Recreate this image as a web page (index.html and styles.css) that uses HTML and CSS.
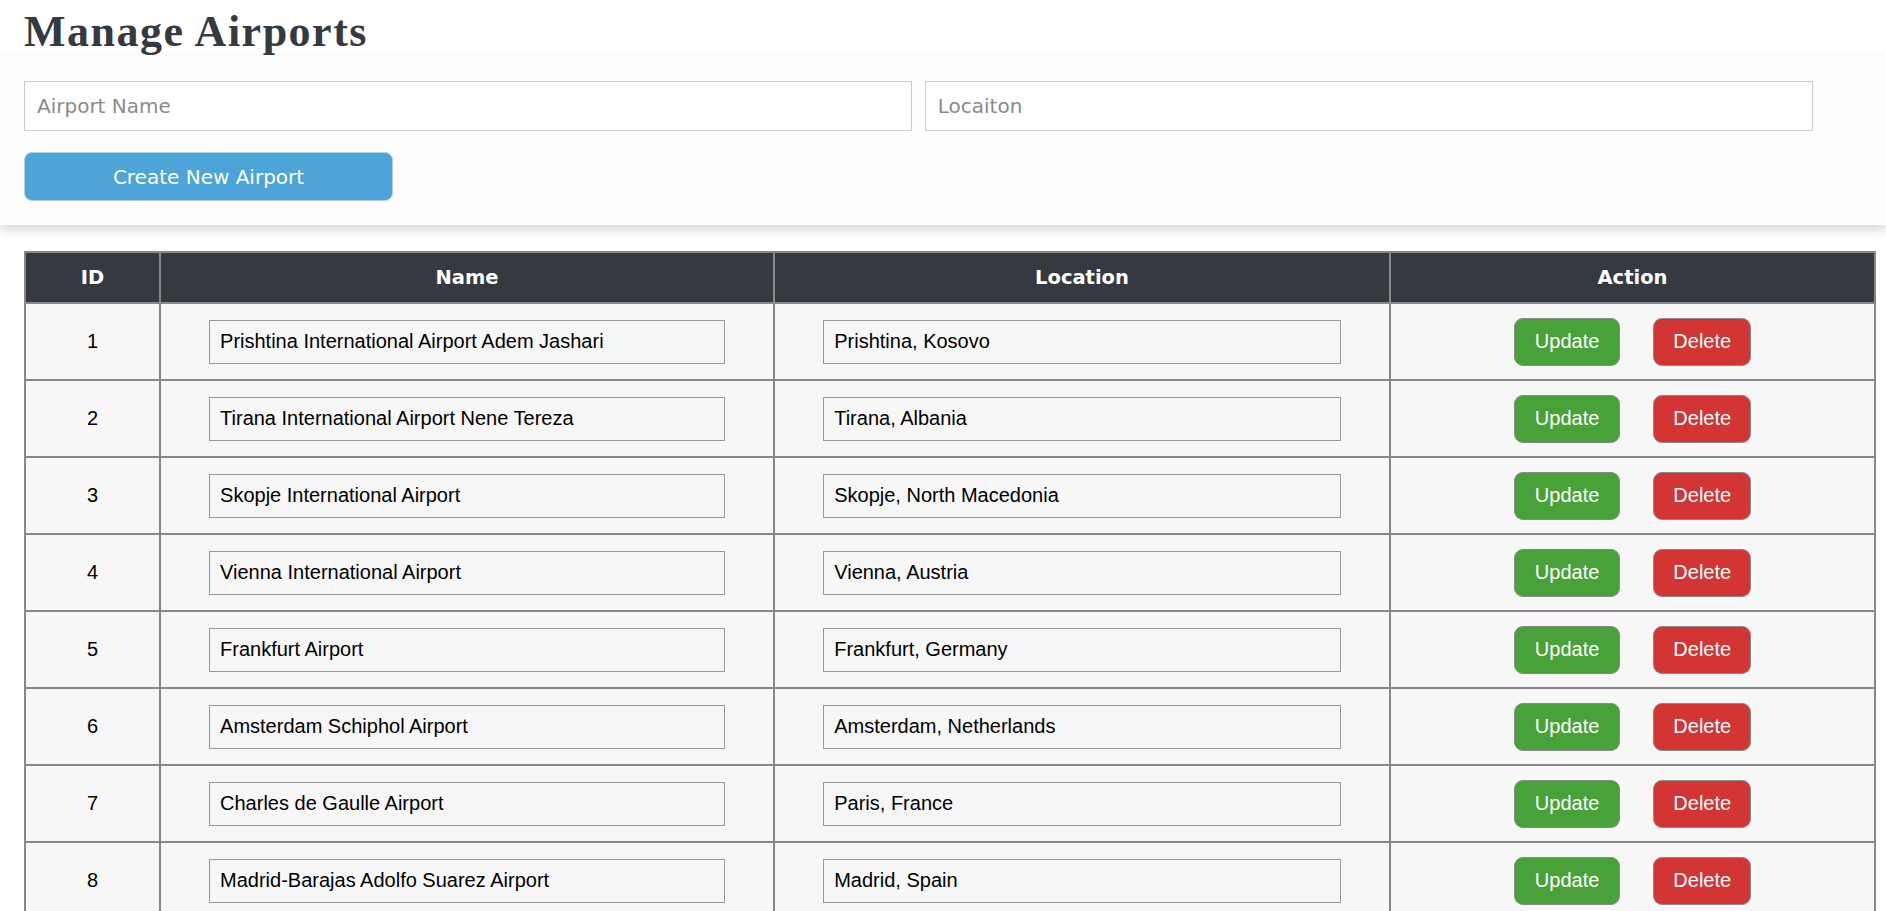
FILE: index.html
```html
<!DOCTYPE html>
<html lang="en">
<head>
<meta charset="utf-8">
<title>Manage Airports</title>
<link rel="stylesheet" href="styles.css">
</head>
<body>
  <h1 class="page-title">Manage Airports</h1>
  <section class="create-card">
    <div class="create-fields">
      <input class="create-input" type="text" placeholder="Airport Name">
      <input class="create-input" type="text" placeholder="Locaiton">
    </div>
    <button class="create-btn" type="button">Create New Airport</button>
  </section>

  <table class="airports">
    <colgroup>
      <col class="col-id">
      <col class="col-name">
      <col class="col-loc">
      <col class="col-act">
    </colgroup>
    <thead>
      <tr><th>ID</th><th>Name</th><th>Location</th><th>Action</th></tr>
    </thead>
    <tbody>
      <tr>
        <td class="cell-id">1</td>
        <td><input class="cell-input" type="text" value="Prishtina International Airport Adem Jashari"></td>
        <td><input class="cell-input" type="text" value="Prishtina, Kosovo"></td>
        <td><div class="actions"><button class="btn btn-update">Update</button><button class="btn btn-delete">Delete</button></div></td>
      </tr>
      <tr>
        <td class="cell-id">2</td>
        <td><input class="cell-input" type="text" value="Tirana International Airport Nene Tereza"></td>
        <td><input class="cell-input" type="text" value="Tirana, Albania"></td>
        <td><div class="actions"><button class="btn btn-update">Update</button><button class="btn btn-delete">Delete</button></div></td>
      </tr>
      <tr>
        <td class="cell-id">3</td>
        <td><input class="cell-input" type="text" value="Skopje International Airport"></td>
        <td><input class="cell-input" type="text" value="Skopje, North Macedonia"></td>
        <td><div class="actions"><button class="btn btn-update">Update</button><button class="btn btn-delete">Delete</button></div></td>
      </tr>
      <tr>
        <td class="cell-id">4</td>
        <td><input class="cell-input" type="text" value="Vienna International Airport"></td>
        <td><input class="cell-input" type="text" value="Vienna, Austria"></td>
        <td><div class="actions"><button class="btn btn-update">Update</button><button class="btn btn-delete">Delete</button></div></td>
      </tr>
      <tr>
        <td class="cell-id">5</td>
        <td><input class="cell-input" type="text" value="Frankfurt Airport"></td>
        <td><input class="cell-input" type="text" value="Frankfurt, Germany"></td>
        <td><div class="actions"><button class="btn btn-update">Update</button><button class="btn btn-delete">Delete</button></div></td>
      </tr>
      <tr>
        <td class="cell-id">6</td>
        <td><input class="cell-input" type="text" value="Amsterdam Schiphol Airport"></td>
        <td><input class="cell-input" type="text" value="Amsterdam, Netherlands"></td>
        <td><div class="actions"><button class="btn btn-update">Update</button><button class="btn btn-delete">Delete</button></div></td>
      </tr>
      <tr>
        <td class="cell-id">7</td>
        <td><input class="cell-input" type="text" value="Charles de Gaulle Airport"></td>
        <td><input class="cell-input" type="text" value="Paris, France"></td>
        <td><div class="actions"><button class="btn btn-update">Update</button><button class="btn btn-delete">Delete</button></div></td>
      </tr>
      <tr>
        <td class="cell-id">8</td>
        <td><input class="cell-input" type="text" value="Madrid-Barajas Adolfo Suarez Airport"></td>
        <td><input class="cell-input" type="text" value="Madrid, Spain"></td>
        <td><div class="actions"><button class="btn btn-update">Update</button><button class="btn btn-delete">Delete</button></div></td>
      </tr>
    </tbody>
  </table>
</body>
</html>
```

FILE: styles.css
```css
html, body {
  margin: 0;
  padding: 0;
  background: #ffffff;
}

body {
  font-family: "Liberation Sans", Arial, sans-serif;
  color: #000;
}

.page-title {
  font-family: "Liberation Serif", "Times New Roman", serif;
  font-weight: bold;
  font-size: 44px;
  line-height: 44px;
  letter-spacing: 1.5px;
  color: #343a40;
  margin: 10px 0 2px 24px;
}

.create-card {
  background: #fefefe;
  box-shadow: 0 5px 10px rgba(0, 0, 0, 0.16);
  padding: 25px 24px 24px;
  display: flex;
  flex-direction: column;
  gap: 21px;
}

.create-fields {
  display: flex;
  gap: 13px;
}

.create-input {
  box-sizing: border-box;
  width: 48.3%;
  height: 50px;
  border: 1px solid #cccccc;
  background: #fff;
  padding: 0 12px;
  font-family: "DejaVu Sans", Verdana, sans-serif;
  font-size: 20px;
  color: #333;
  outline: none;
}

.create-input::placeholder {
  color: #8a8a8a;
}

.create-btn {
  box-sizing: border-box;
  width: 369px;
  height: 49px;
  background: #4da4d8;
  color: #fff;
  border: 1px solid #b8cfdc;
  border-radius: 8px;
  font-family: "DejaVu Sans", Verdana, sans-serif;
  font-size: 20px;
  cursor: pointer;
}

.airports {
  margin: 26px 0 0 24px;
  width: 1850px;
  border-collapse: collapse;
  table-layout: fixed;
  border: 2px solid #888888;
}

.col-id { width: 135px; }
.col-name { width: 614px; }
.col-loc { width: 616px; }
.col-act { width: 485px; }

.airports th {
  background: #343a40;
  color: #fff;
  font-family: "DejaVu Sans", Verdana, sans-serif;
  font-weight: bold;
  font-size: 19.5px;
  height: 49px;
  padding: 0;
  border: 2px solid #888888;
  text-align: center;
}

.airports td {
  background: #f7f7f7;
  border: 2px solid #888888;
  padding: 13.5px 0;
  text-align: center;
  font-size: 20px;
  vertical-align: middle;
}

.cell-input {
  box-sizing: border-box;
  width: 84.3%;
  height: 44px;
  border: 1px solid #999999;
  background: #f7f7f7;
  padding: 0 10px;
  font-family: "Liberation Sans", Arial, sans-serif;
  font-size: 20px;
  color: #000;
  outline: none;
  vertical-align: middle;
}

.actions {
  display: flex;
  justify-content: center;
  gap: 33px;
}

.btn {
  box-sizing: border-box;
  height: 48px;
  padding: 0 19px;
  border: 1px solid #8a8a8a;
  border-radius: 9px;
  color: #fff;
  font-family: "Liberation Sans", Arial, sans-serif;
  font-size: 20px;
  cursor: pointer;
}

.btn-update {
  background: #48a139;
  padding: 0 20px;
}

.btn-delete {
  background: #d33535;
}
```
